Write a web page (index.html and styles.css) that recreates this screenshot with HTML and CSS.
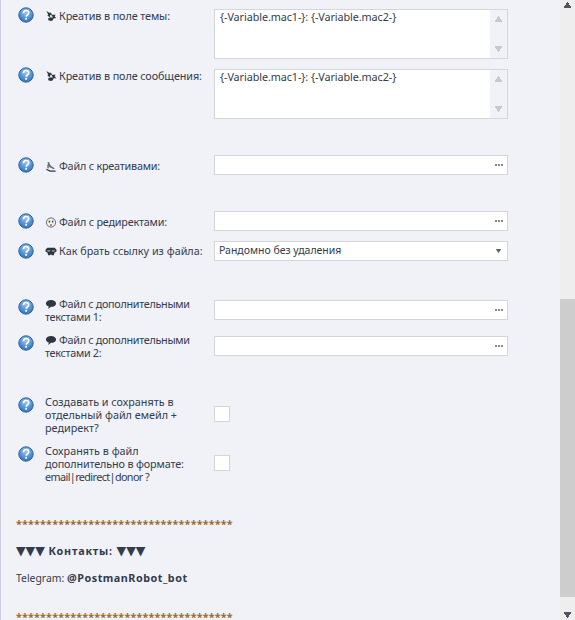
FILE: index.html
```html
<!DOCTYPE html>
<html lang="ru">
<head>
<meta charset="utf-8">
<title>Настройки</title>
<link rel="stylesheet" href="styles.css">
</head>
<body>
<svg class="defs" width="0" height="0" aria-hidden="true">
  <defs>
    <radialGradient id="hg" cx="50%" cy="30%" r="75%">
      <stop offset="0" stop-color="#9cc4ee"/>
      <stop offset="0.6" stop-color="#4f8fd8"/>
      <stop offset="1" stop-color="#2a6db5"/>
    </radialGradient>
    <symbol id="help" viewBox="0 0 16 16">
      <circle cx="8" cy="8" r="7.2" fill="url(#hg)" stroke="#2f6299" stroke-width="1"/>
      <path d="M5.4 6.200C5.500 4.500 6.700 3.500 8.100 3.500c1.600 0 2.600 1 2.600 2.300 0 1.100-.7 1.700-1.400 2.200-.7.500-1 .8-1 1.700" fill="none" stroke="#fff" stroke-width="1.700"/>
      <rect x="7.200" y="10.800" width="1.800" height="1.900" fill="#fff"/>
    </symbol>
    <symbol id="mask" viewBox="0 0 12 12">
      <path d="M1 0l3 2 2 0 1 2 4 0-1 2 2 2-3 0-1 2-2 1-3-1 0-2 2-1-3-2 1-1z" fill="#2f3640"/>
      <path d="M5 4l2 1 1 2-3 0z" fill="#e8e8e8"/>
    </symbol>
    <symbol id="ski" viewBox="0 0 12 12">
      <path d="M2 1l2 0 1 3 2 2 3 2-1 1-4-2-2-1 1 2-2 0 0-4 1-1z" fill="#6a7078"/>
      <path d="M1 9l4 2 6 0" fill="none" stroke="#2f3640" stroke-width="1.200"/>
    </symbol>
    <symbol id="face" viewBox="0 0 12 12">
      <circle cx="6" cy="6" r="5" fill="#f2efe6" stroke="#555c64"/>
      <rect x="3.500" y="4" width="1.500" height="2" fill="#3a4048"/>
      <rect x="7" y="4" width="1.500" height="2" fill="#3a4048"/>
      <rect x="5" y="8" width="2" height="1.500" fill="#a05040"/>
    </symbol>
    <symbol id="goggles" viewBox="0 0 12 12">
      <path d="M2 2h8l2 2v2l-2 1-1 3H7L6 9 5 10H3L2 7 0 6V4z" fill="#2f3640"/>
      <path d="M2 4.500h3v1.500H2zM7 4.500h3v1.500H7z" fill="#aab0b6"/>
    </symbol>
    <symbol id="speech" viewBox="0 0 12 12">
      <path d="M6 1c3 0 5.500 1.500 5.500 3.800S9 8.500 6 8.500L3 11l.6-2.800C1.800 7.600.5 6.400.5 4.800.5 2.500 3 1 6 1z" fill="#2f3640"/>
    </symbol>
    <symbol id="up" viewBox="0 0 7 6"><path d="M3 0h1v1h1v2h1v1h1v2H0V4h1V3h1V1h1z"/></symbol>
    <symbol id="down" viewBox="0 0 7 6"><path d="M0 0h7v2H6v1H5v2H4v1H3V5H2V3H1V2H0z"/></symbol>
  </defs>
</svg>

<main class="page">
  <div class="form">
    <section class="row row-area gap-9">
      <svg class="help help-area"><use href="#help"/></svg>
      <div class="label label-area"><svg class="ico"><use href="#mask"/></svg>Креатив в поле темы:</div>
      <div class="field area">
        <div class="area-text">{-Variable.mac1-}: {-Variable.mac2-}</div>
        <div class="area-bar"><svg class="arrow"><use href="#up"/></svg><svg class="arrow"><use href="#down"/></svg></div>
      </div>
    </section>
    <section class="row row-area gap-10">
      <svg class="help help-area"><use href="#help"/></svg>
      <div class="label label-area"><svg class="ico"><use href="#mask"/></svg>Креатив в поле сообщения:</div>
      <div class="field area">
        <div class="area-text">{-Variable.mac1-}: {-Variable.mac2-}</div>
        <div class="area-bar"><svg class="arrow"><use href="#up"/></svg><svg class="arrow"><use href="#down"/></svg></div>
      </div>
    </section>
    <section class="row gap-36">
      <svg class="help help-input"><use href="#help"/></svg>
      <div class="label label-input label-file"><svg class="ico"><use href="#ski"/></svg>Файл с креативами:</div>
      <div class="field input"><span class="dots"></span></div>
    </section>
    <section class="row gap-36">
      <svg class="help help-input"><use href="#help"/></svg>
      <div class="label label-input label-file"><svg class="ico"><use href="#face"/></svg>Файл с редиректами:</div>
      <div class="field input"><span class="dots"></span></div>
    </section>
    <section class="row gap-10">
      <svg class="help help-input"><use href="#help"/></svg>
      <div class="label label-input label-how"><svg class="ico"><use href="#goggles"/></svg>Как брать ссылку из файла:</div>
      <div class="field input select"><span class="select-text">Рандомно без удаления</span><svg class="caret"><use href="#down"/></svg></div>
    </section>
    <section class="row gap-39">
      <svg class="help help-two"><use href="#help"/></svg>
      <div class="label label-two"><svg class="ico"><use href="#speech"/></svg>Файл с дополнительными текстами 1:</div>
      <div class="field input"><span class="dots"></span></div>
    </section>
    <section class="row gap-16">
      <svg class="help help-two"><use href="#help"/></svg>
      <div class="label label-two"><svg class="ico"><use href="#speech"/></svg>Файл с дополнительными текстами 2:</div>
      <div class="field input"><span class="dots"></span></div>
    </section>
    <section class="row row-check gap-50">
      <svg class="help help-check"><use href="#help"/></svg>
      <div class="label label-three">Создавать и сохранять в отдельный файл емейл + редирект?</div>
      <div class="check"></div>
    </section>
    <section class="row row-check gap-33">
      <svg class="help help-check"><use href="#help"/></svg>
      <div class="label label-three">Сохранять в файл <span class="tight">дополнительно в формате:</span> <span class="tighter">email|redirect|donor ?</span></div>
      <div class="check"></div>
    </section>
  </div>

  <div class="notes">
    <p class="stars">************************************</p>
    <p class="contacts"><b><span class="tri">▼▼▼</span> Контакты: <span class="tri">▼▼▼</span></b></p>
    <p class="telegram"><span class="tg-label">Telegram:</span> <b>@PostmanRobot_bot</b></p>
    <p class="stars stars-end">************************************</p>
  </div>
</main>

<aside class="scroll">
  <svg class="scroll-arrow"><use href="#up"/></svg>
  <div class="scroll-track"><div class="scroll-thumb"></div></div>
  <svg class="scroll-arrow"><use href="#down"/></svg>
</aside>
</body>
</html>
```
FILE: styles.css
```css
* { box-sizing: border-box; }
html, body { margin: 0; height: 100%; overflow: hidden; }
body {
  display: flex;
  width: 575px;
  height: 620px;
  background: #f1f2f7;
  color: #333b4d;
  font: 10.8px/13px "Noto Sans", sans-serif;
}
.defs { position: absolute; }
.page {
  flex: 1;
  min-width: 0;
  border-left: 1px solid #c9d0dc;
  padding-left: 15px;
  overflow: hidden;
}
.form { width: 492px; padding-left: 2px; }
.row { display: flex; align-items: flex-start; height: 20px; }
.row-area { height: 50px; }
.row-check { height: 16px; }
.help { flex: none; width: 16px; height: 16px; }
.help-area { margin-top: -2px; }
.help-input { margin-top: 2px; }
.help-two { margin-top: -1px; }
.help-check { margin-top: -9px; }
.label { flex: none; width: 160px; margin: 0 9px 0 11px; }
.label-area { margin-top: 0; letter-spacing: -.1px; }
.label-input { margin-top: 4px; }
.label-how { margin-top: 3px; }
.label-file { letter-spacing: -.2px; }
.label-two { margin-top: -3px; letter-spacing: -.3px; }
.label-three { margin-top: -11px; }
.tight { display: inline-block; letter-spacing: -.15px; }
.tighter { display: inline-block; letter-spacing: -.6px; }
.ico { width: 12px; height: 11px; margin-right: 2px; vertical-align: -2px; }
.field { flex: 1; background: #fff; border: 1px solid #d2d5dc; }
.area { height: 50px; display: flex; justify-content: space-between; }
.area-text { padding: 0 5px; letter-spacing: -.08px; }
.area-bar { width: 17px; background: #f1f2f7; display: flex; flex-direction: column; justify-content: space-between; align-items: center; padding: 6px 0; fill: #c6c8cc; }
.arrow { width: 7px; height: 6px; }
.input { height: 20px; padding: 0 4px; display: flex; align-items: center; justify-content: flex-end; }
.select { justify-content: space-between; }
.select-text { font-size: 10.5px; margin-top: -1px; }
.caret { width: 7px; height: 4px; fill: #5c6068; margin-right: 1px; }
.dots { width: 8px; height: 2px; background: repeating-linear-gradient(90deg, #888 0 2px, transparent 2px 3px); }
.check { width: 16px; height: 16px; background: #fff; border: 1px solid #d2d5dc; }
.gap-9 { margin-top: 9px; }
.gap-10 { margin-top: 10px; }
.gap-16 { margin-top: 16px; }
.gap-33 { margin-top: 33px; }
.gap-36 { margin-top: 36px; }
.gap-39 { margin-top: 39px; }
.gap-50 { margin-top: 50px; }
.notes { margin-top: 46px; }
.notes p { margin: 0; }
.stars { color: #9b6a2f; font-weight: 700; letter-spacing: .17px; }
.contacts { padding-top: 14px; letter-spacing: .8px; }
.telegram { padding-top: 14px; }
.tg-label { font-size: 10.4px; }
.telegram b { letter-spacing: .5px; }
.stars-end { padding-top: 25px; }
.tri { font: 700 12.5px/13px "DejaVu Sans", sans-serif; letter-spacing: 0; }
.scroll { flex: none; width: 15px; height: 620px; background: #eeeeee; display: flex; flex-direction: column; align-items: center; fill: #50565f; }
.scroll-arrow { flex: none; width: 7px; height: 6px; margin: 2px 0; }
.scroll-track { flex: 1; position: relative; width: 100%; }
.scroll-thumb { position: absolute; left: 0; right: 0; top: 289px; height: 298px; background: #cdcdcd; }
```
